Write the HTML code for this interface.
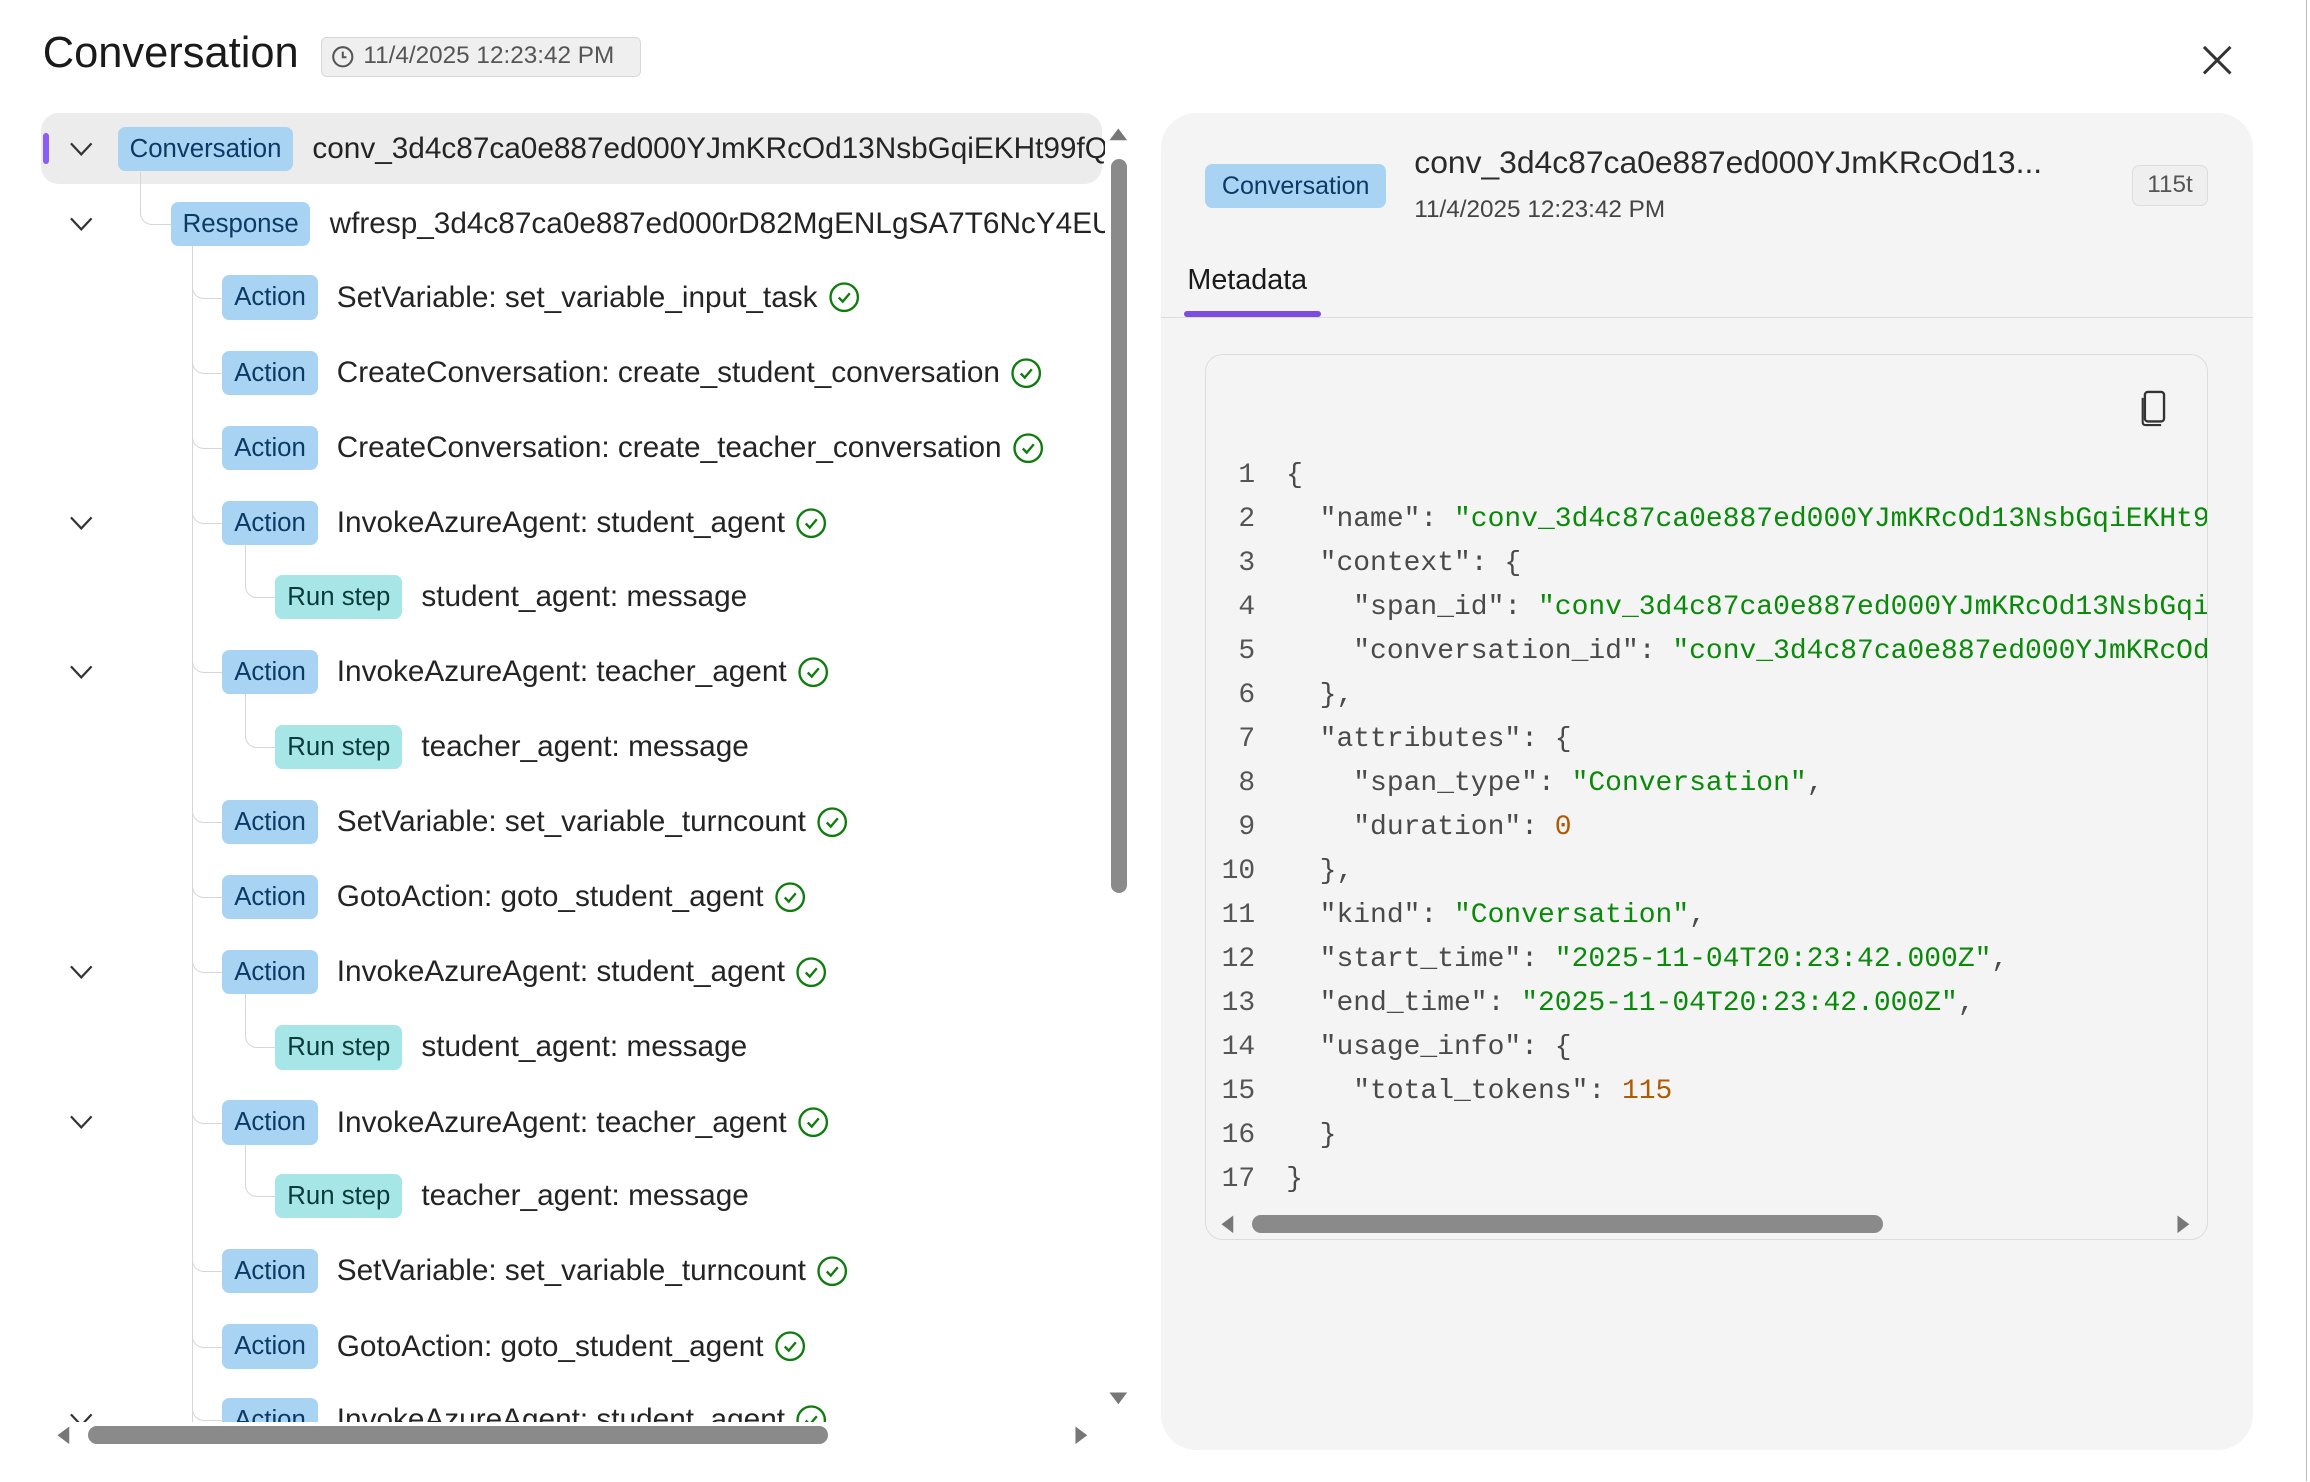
<!DOCTYPE html>
<html><head><meta charset="utf-8"><style>
html,body{margin:0;padding:0;background:#fff;overflow:hidden;}
html{width:2310px;height:1482px;}
body{width:1568px;height:1005px;zoom:1.47321;position:relative;overflow:hidden;font-family:"Liberation Sans",sans-serif;color:#242424;}
.abs{position:absolute;}
.badge{position:absolute;height:30px;line-height:30px;border-radius:5px;background:#a9d3f2;color:#0b3a66;font-size:17.5px;padding:0 9px;box-sizing:border-box;}
.row{position:absolute;height:30px;display:flex;align-items:center;font-size:20.2px;white-space:nowrap;}
.row .b{height:30px;line-height:30px;border-radius:5px;background:#a9d3f2;color:#0b3a66;font-size:17.5px;padding:0 8px;margin-right:13px;}
.row .b.r{background:#a6e6e6;color:#0b3a3a;}
.row svg{margin-left:7px;}
.chev{position:absolute;left:46px;width:18px;height:18px;}
.vl{position:absolute;width:1px;background:#d6d6d6;}
.el{position:absolute;border-left:1px solid #d6d6d6;border-bottom:1px solid #d6d6d6;border-bottom-left-radius:8px;}
.code{position:absolute;left:826px;top:308px;font-family:"Liberation Mono",monospace;font-size:19px;line-height:29.9px;color:#4a4a4a;white-space:pre;}
.ln{display:inline-block;width:26px;text-align:right;margin-right:21px;color:#555;}
.s{color:#0a8a0a;}.n{color:#b05a00;}
</style></head><body>
<div class="abs" style="left:29px;top:20px;font-size:29.5px;color:#1a1a1a;">Conversation</div>
<div class="abs" style="left:218px;top:25px;width:217px;height:27px;box-sizing:border-box;border:1px solid #d8d8d8;border-radius:4px;background:#efefef;font-size:16.5px;color:#555;line-height:25px;padding-left:28px;">11/4/2025 12:23:42 PM
<svg class="abs" style="left:6px;top:5px" width="16" height="16" viewBox="0 0 16 16"><circle cx="8" cy="8" r="6.5" fill="none" stroke="#555" stroke-width="1.4"/><path d="M8 4.5V8.3H10.5" fill="none" stroke="#555" stroke-width="1.4"/></svg></div>
<svg class="abs" style="left:1494px;top:30px" width="22" height="22" viewBox="0 0 22 22"><path d="M2 2L20 20M20 2L2 20" stroke="#333" stroke-width="2"/></svg>

<div class="abs" style="left:28px;top:77px;width:722px;height:888px;overflow:hidden;">
<div style="position:relative;left:-28px;top:-77px;width:1568px;height:1100px;">
<div class="abs" style="left:28px;top:77px;width:720px;height:48px;background:#ececec;border-radius:12px;"></div>
<div class="abs" style="left:29px;top:90px;width:4px;height:21px;background:#8b5cf6;border-radius:2px;"></div>
<div class="el" style="left:95px;top:117px;width:21px;height:35px;"></div>
<div class="vl" style="left:130px;top:167px;height:900px;"></div>
<div class="el" style="left:130px;top:186px;width:21px;height:16px;"></div>
<div class="el" style="left:130px;top:237px;width:21px;height:16px;"></div>
<div class="el" style="left:130px;top:288px;width:21px;height:16px;"></div>
<div class="el" style="left:130px;top:339px;width:21px;height:16px;"></div>
<div class="el" style="left:130px;top:440px;width:21px;height:16px;"></div>
<div class="el" style="left:130px;top:542px;width:21px;height:16px;"></div>
<div class="el" style="left:130px;top:593px;width:21px;height:16px;"></div>
<div class="el" style="left:130px;top:644px;width:21px;height:16px;"></div>
<div class="el" style="left:130px;top:746px;width:21px;height:16px;"></div>
<div class="el" style="left:130px;top:847px;width:21px;height:16px;"></div>
<div class="el" style="left:130px;top:898px;width:21px;height:16px;"></div>
<div class="el" style="left:130px;top:948px;width:21px;height:16px;"></div>
<div class="el" style="left:166px;top:370px;width:21px;height:35px;"></div>
<div class="el" style="left:166px;top:471px;width:21px;height:36px;"></div>
<div class="el" style="left:166px;top:675px;width:21px;height:36px;"></div>
<div class="el" style="left:166px;top:777px;width:21px;height:35px;"></div>

<svg width="0" height="0" style="position:absolute"><defs>
<symbol id="ck" viewBox="0 0 22 22"><circle cx="11" cy="11" r="9.3" fill="none" stroke="#107c10" stroke-width="1.6"/><path d="M7.3 11.2L10 14L14.8 8.3" fill="none" stroke="#107c10" stroke-width="1.6"/></symbol>
<symbol id="cv" viewBox="0 0 18 18"><path d="M2 5L9 12.5L16 5" fill="none" stroke="#333" stroke-width="1.5"/></symbol>
</defs></svg>

<svg class="chev" style="top:92px"><use href="#cv"/></svg>
<svg class="chev" style="top:143px"><use href="#cv"/></svg>
<svg class="chev" style="top:346px"><use href="#cv"/></svg>
<svg class="chev" style="top:447px"><use href="#cv"/></svg>
<svg class="chev" style="top:651px"><use href="#cv"/></svg>
<svg class="chev" style="top:753px"><use href="#cv"/></svg>
<svg class="chev" style="top:955px"><use href="#cv"/></svg>

<div class="row" style="left:80px;top:86px"><span class="b">Conversation</span>conv_3d4c87ca0e887ed000YJmKRcOd13NsbGqiEKHt99fQI</div>
<div class="row" style="left:116px;top:137px"><span class="b">Response</span>wfresp_3d4c87ca0e887ed000rD82MgENLgSA7T6NcY4EUk</div>
<div class="row" style="left:151px;top:187px"><span class="b">Action</span>SetVariable: set_variable_input_task<svg width="22" height="22"><use href="#ck"/></svg></div>
<div class="row" style="left:151px;top:238px"><span class="b">Action</span>CreateConversation: create_student_conversation<svg width="22" height="22"><use href="#ck"/></svg></div>
<div class="row" style="left:151px;top:289px"><span class="b">Action</span>CreateConversation: create_teacher_conversation<svg width="22" height="22"><use href="#ck"/></svg></div>
<div class="row" style="left:151px;top:340px"><span class="b">Action</span>InvokeAzureAgent: student_agent<svg width="22" height="22"><use href="#ck"/></svg></div>
<div class="row" style="left:187px;top:390px"><span class="b r">Run step</span>student_agent: message</div>
<div class="row" style="left:151px;top:441px"><span class="b">Action</span>InvokeAzureAgent: teacher_agent<svg width="22" height="22"><use href="#ck"/></svg></div>
<div class="row" style="left:187px;top:492px"><span class="b r">Run step</span>teacher_agent: message</div>
<div class="row" style="left:151px;top:543px"><span class="b">Action</span>SetVariable: set_variable_turncount<svg width="22" height="22"><use href="#ck"/></svg></div>
<div class="row" style="left:151px;top:594px"><span class="b">Action</span>GotoAction: goto_student_agent<svg width="22" height="22"><use href="#ck"/></svg></div>
<div class="row" style="left:151px;top:645px"><span class="b">Action</span>InvokeAzureAgent: student_agent<svg width="22" height="22"><use href="#ck"/></svg></div>
<div class="row" style="left:187px;top:696px"><span class="b r">Run step</span>student_agent: message</div>
<div class="row" style="left:151px;top:747px"><span class="b">Action</span>InvokeAzureAgent: teacher_agent<svg width="22" height="22"><use href="#ck"/></svg></div>
<div class="row" style="left:187px;top:797px"><span class="b r">Run step</span>teacher_agent: message</div>
<div class="row" style="left:151px;top:848px"><span class="b">Action</span>SetVariable: set_variable_turncount<svg width="22" height="22"><use href="#ck"/></svg></div>
<div class="row" style="left:151px;top:899px"><span class="b">Action</span>GotoAction: goto_student_agent<svg width="22" height="22"><use href="#ck"/></svg></div>
<div class="row" style="left:151px;top:949px"><span class="b">Action</span>InvokeAzureAgent: student_agent<svg width="22" height="22"><use href="#ck"/></svg></div>
</div></div>

<svg class="abs" style="left:752px;top:86px" width="14" height="10"><path d="M1 9L7 1L13 9Z" fill="#777"/></svg>
<div class="abs" style="left:754px;top:108px;width:11px;height:498px;background:#8a8a8a;border-radius:6px;"></div>
<svg class="abs" style="left:752px;top:944px" width="14" height="10"><path d="M1 1L7 9L13 1Z" fill="#777"/></svg>
<svg class="abs" style="left:38px;top:967px" width="10" height="14"><path d="M9 1L1 7L9 13Z" fill="#777"/></svg>
<div class="abs" style="left:60px;top:968px;width:502px;height:12px;background:#8a8a8a;border-radius:6px;"></div>
<svg class="abs" style="left:729px;top:967px" width="10" height="14"><path d="M1 1L9 7L1 13Z" fill="#777"/></svg>

<div class="abs" style="left:788px;top:77px;width:741px;height:907px;background:#f4f4f4;border-radius:24px;"></div>
<div class="badge" style="left:818px;top:111px;width:123px;text-align:center;font-size:17px;padding:0;">Conversation</div>
<div class="abs" style="left:960px;top:98px;font-size:21.6px;color:#2a2a2a;">conv_3d4c87ca0e887ed000YJmKRcOd13...</div>
<div class="abs" style="left:960px;top:133px;font-size:16.5px;color:#444;">11/4/2025 12:23:42 PM</div>
<div class="abs" style="left:1447px;top:112px;width:52px;height:28px;box-sizing:border-box;border:1px solid #dcdcdc;border-radius:5px;background:#efefef;text-align:center;line-height:26px;font-size:16.5px;color:#555;">115t</div>
<div class="abs" style="left:806px;top:179px;font-size:19.5px;color:#1a1a1a;">Metadata</div>
<div class="abs" style="left:804px;top:211px;width:93px;height:4px;background:#7c4ddf;border-radius:2px;"></div>
<div class="abs" style="left:788px;top:215px;width:741px;height:1px;background:#dcdcdc;"></div>
<div class="abs" style="left:818px;top:240px;width:681px;height:602px;box-sizing:border-box;border:1px solid #dcdcdc;border-radius:12px;"></div>
<svg class="abs" style="left:1452px;top:264px" width="22" height="26" viewBox="0 0 22 26"><rect x="4" y="2" width="13" height="20" rx="2" fill="none" stroke="#333" stroke-width="1.6"/><path d="M2.5 6V22.5Q2.5 24.5 4.5 24.5H15" fill="none" stroke="#333" stroke-width="1.4"/></svg>
<div class="abs" style="left:826px;top:300px;width:672px;height:520px;overflow:hidden;">
<div class="code" style="left:0;top:8px;"><span class="ln">1</span>{
<span class="ln">2</span>  "name": <span class="s">"conv_3d4c87ca0e887ed000YJmKRcOd13NsbGqiEKHt99fQI"</span>,
<span class="ln">3</span>  "context": {
<span class="ln">4</span>    "span_id": <span class="s">"conv_3d4c87ca0e887ed000YJmKRcOd13NsbGqiEKHt99fQI"</span>,
<span class="ln">5</span>    "conversation_id": <span class="s">"conv_3d4c87ca0e887ed000YJmKRcOd13NsbGqiEKHt99fQI"</span>
<span class="ln">6</span>  },
<span class="ln">7</span>  "attributes": {
<span class="ln">8</span>    "span_type": <span class="s">"Conversation"</span>,
<span class="ln">9</span>    "duration": <span class="n">0</span>
<span class="ln">10</span>  },
<span class="ln">11</span>  "kind": <span class="s">"Conversation"</span>,
<span class="ln">12</span>  "start_time": <span class="s">"2025-11-04T20:23:42.000Z"</span>,
<span class="ln">13</span>  "end_time": <span class="s">"2025-11-04T20:23:42.000Z"</span>,
<span class="ln">14</span>  "usage_info": {
<span class="ln">15</span>    "total_tokens": <span class="n">115</span>
<span class="ln">16</span>  }
<span class="ln">17</span>}</div></div>
<svg class="abs" style="left:828px;top:824px" width="10" height="14"><path d="M9 1L1 7L9 13Z" fill="#777"/></svg>
<div class="abs" style="left:850px;top:825px;width:428px;height:12px;background:#8a8a8a;border-radius:6px;"></div>
<svg class="abs" style="left:1477px;top:824px" width="10" height="14"><path d="M1 1L9 7L1 13Z" fill="#777"/></svg>
<div class="abs" style="left:1565px;top:0;width:1px;height:1005px;background:#bbb;"></div>
</body></html>
